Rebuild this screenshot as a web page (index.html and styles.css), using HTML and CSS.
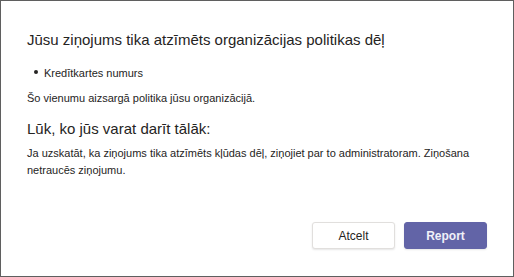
FILE: index.html
```html
<!DOCTYPE html>
<html lang="lv">
<head>
  <meta charset="UTF-8" />
  <title>Ziņojums atzīmēts</title>
  <link rel="stylesheet" href="styles.css">
</head>
<body>
  <div class="dialog">
    <h1 class="dialog-title">Jūsu ziņojums tika atzīmēts organizācijas politikas dēļ</h1>

    <ul class="policy-list">
      <li>Kredītkartes numurs</li>
    </ul>
    <p class="note">Šo vienumu aizsargā politika jūsu organizācijā.</p>

    <h2 class="subtitle">Lūk, ko jūs varat darīt tālāk:</h2>
    <p class="note">Ja uzskatāt, ka ziņojums tika atzīmēts kļūdas dēļ, ziņojiet par to administratoram. Ziņošana netraucēs ziņojumu.</p>

    <div class="buttons">
      <button class="btn">Atcelt</button>
      <button class="btn primary">Report</button>
    </div>
  </div>
</body>
</html>
```

FILE: styles.css
```css
* {
  box-sizing: border-box;
  margin: 0;
  padding: 0;
}

body {
  font-family: "Liberation Sans", Arial, sans-serif;
  background: #fff;
  color: #252423;
}

.dialog {
  width: 514px;
  height: 277px;
  border: 1px solid #5f5f5f;
  padding: 30px 26px 0 26px;
  display: flex;
  flex-direction: column;
}

.dialog-title {
  font-size: 15px;
  font-weight: normal;
  line-height: 18px;
  margin-bottom: 17px;
}

.policy-list {
  list-style: none;
  font-size: 11px;
  line-height: 14px;
  margin-bottom: 10px;
}

.policy-list li {
  position: relative;
  padding-left: 17px;
}

.policy-list li::before {
  content: "";
  position: absolute;
  left: 7px;
  top: 4px;
  width: 4px;
  height: 4px;
  border-radius: 50%;
  background: #252423;
}

.note {
  font-size: 11px;
  line-height: 17px;
}

.subtitle {
  font-size: 15px;
  font-weight: normal;
  line-height: 18px;
  margin-top: 13px;
  margin-bottom: 7px;
}

.buttons {
  display: flex;
  justify-content: flex-end;
  gap: 9px;
  margin-top: auto;
  margin-bottom: 27px;
}

.btn {
  width: 83px;
  height: 27px;
  font-family: inherit;
  font-size: 12px;
  color: #252423;
  background: #fff;
  border: 1px solid #e1dfdd;
  border-radius: 3px;
  box-shadow: 0 1px 2px rgba(0, 0, 0, 0.1);
}

.btn.primary {
  background: #6264a7;
  border-color: #6264a7;
  color: #f0f0f8;
  font-weight: bold;
}
```
